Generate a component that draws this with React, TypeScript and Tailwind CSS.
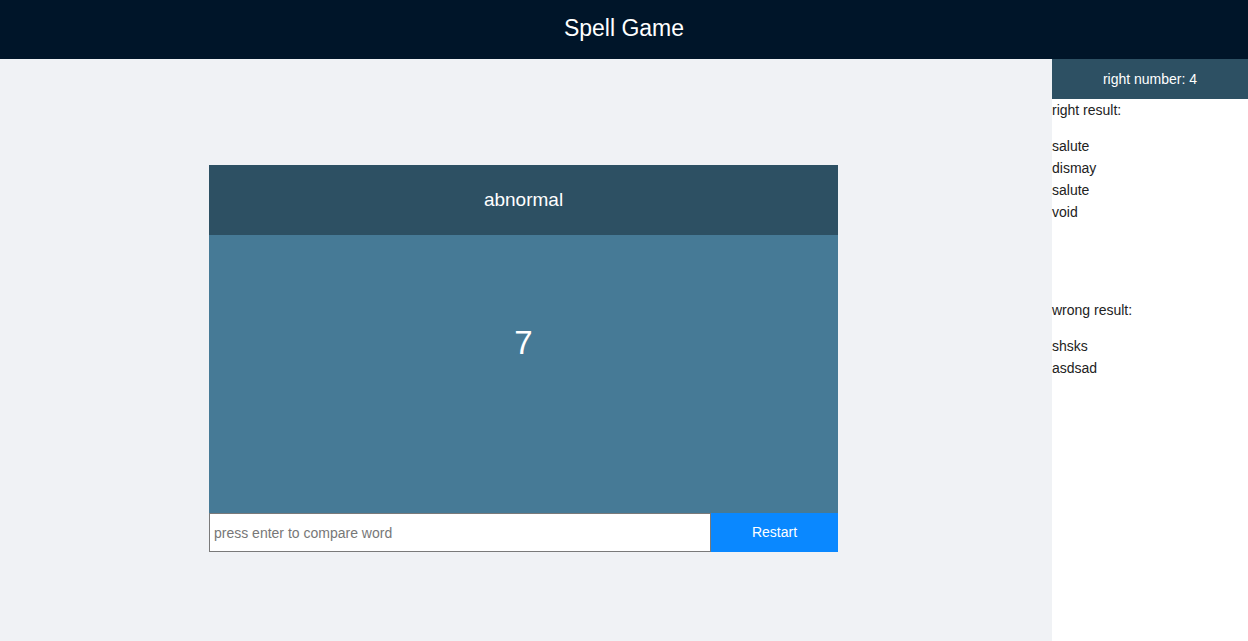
export default function App() {
  const right = ["salute", "dismay", "salute", "void"];
  const wrong = ["shsks", "asdsad"];
  return (
    <div
      className="flex h-[641px] w-[1248px] flex-col overflow-hidden bg-[#f0f2f5] text-[14px] text-[#222]"
      style={{ fontFamily: '"Liberation Sans", Arial, sans-serif' }}
    >
      <header className="flex h-[59px] shrink-0 items-center justify-center bg-[#001529] pb-[3px] text-[23px] text-white">
        Spell Game
      </header>
      <div className="flex flex-1">
        <main className="flex-1 pl-[209px] pt-[106px]">
          <div className="flex w-[629px] flex-col">
            <div className="flex h-[70px] items-center justify-center bg-[#2d5063] text-[19px] text-white">
              abnormal
            </div>
            <div className="flex h-[278px] items-center justify-center bg-[#467a96] pb-[62px] text-[33px] text-white">
              7
            </div>
            <div className="flex h-[39px]">
              <input
                className="h-full flex-1 border border-[#7a7a7a] bg-white px-[4px] text-[14px] outline-none placeholder:text-[#777]"
                placeholder="press enter to compare word"
              />
              <button className="flex h-full w-[127px] items-center justify-center bg-[#0a88ff] text-[14px] text-white">
                Restart
              </button>
            </div>
          </div>
        </main>
        <aside className="w-[196px] shrink-0 bg-white">
          <div className="flex h-[40px] items-center justify-center bg-[#2d5063] text-white">
            right number: 4
          </div>
          <div className="leading-[22px]">
            <p className="mb-[14px]">right result:</p>
            <div className="h-[164px]">
              {right.map((w, i) => (
                <div key={i}>{w}</div>
              ))}
            </div>
            <p className="mb-[14px]">wrong result:</p>
            <div>
              {wrong.map((w, i) => (
                <div key={i}>{w}</div>
              ))}
            </div>
          </div>
        </aside>
      </div>
    </div>
  );
}
